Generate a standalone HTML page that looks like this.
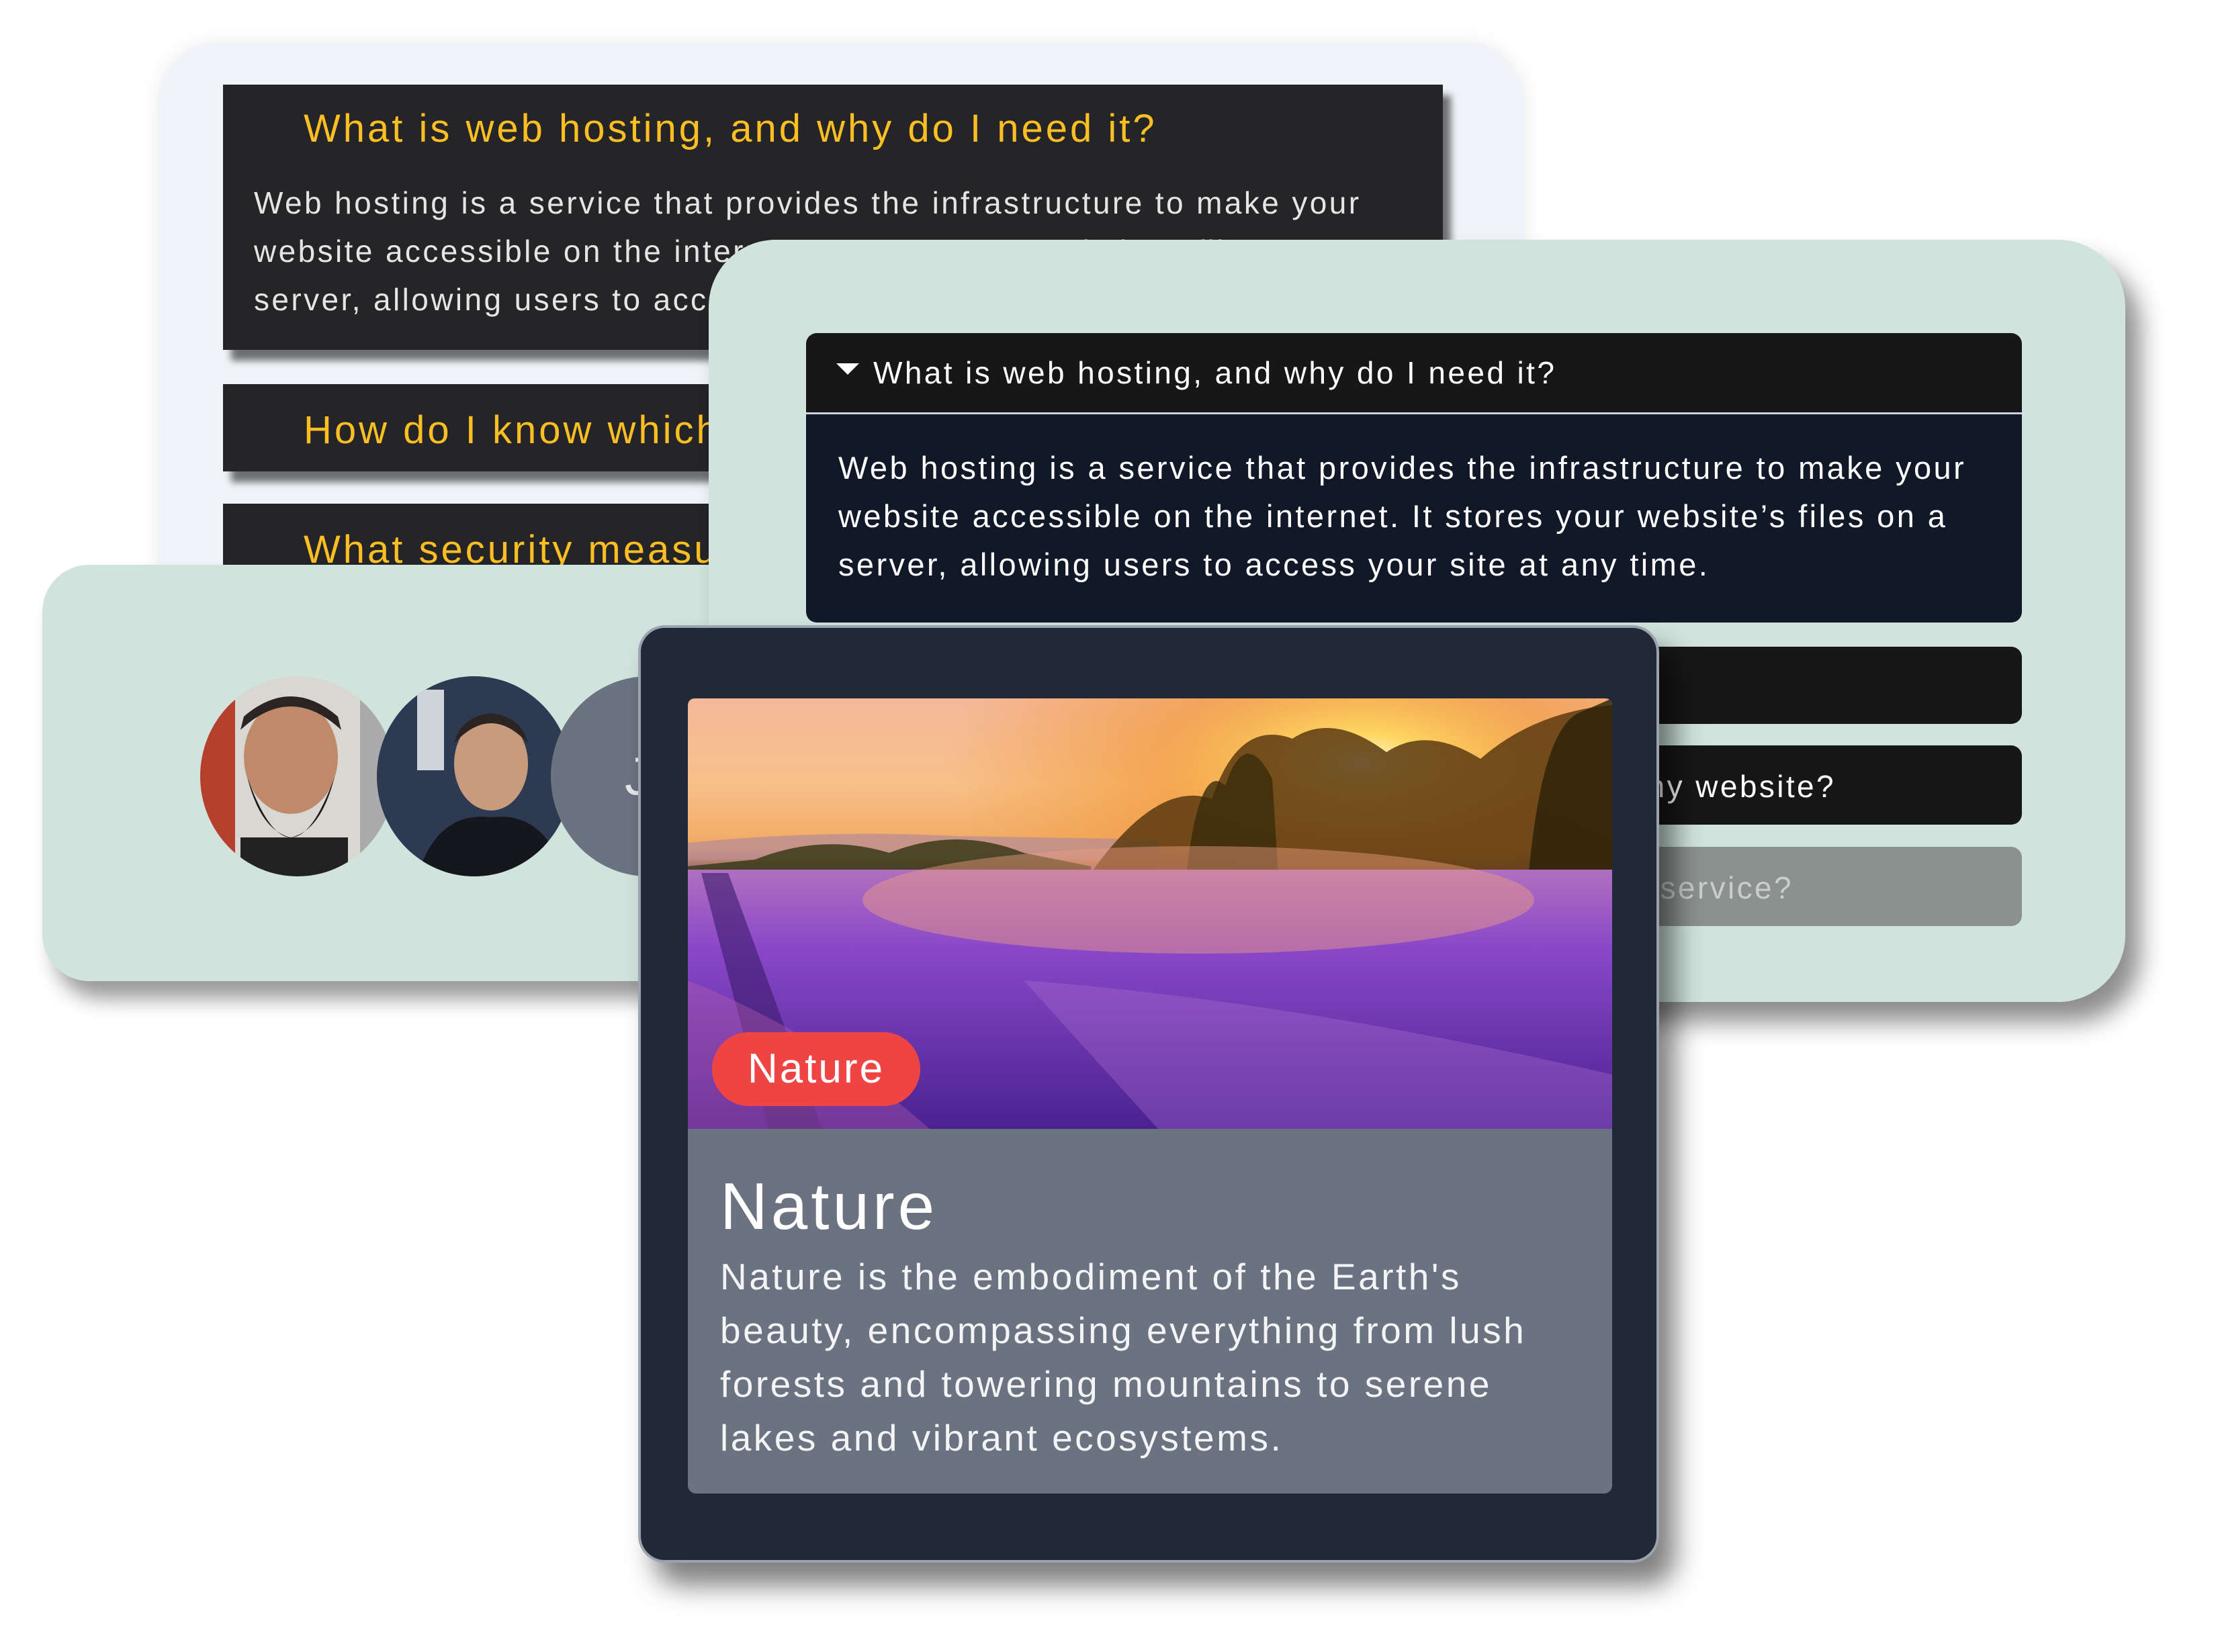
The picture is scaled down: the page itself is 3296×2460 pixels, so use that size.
<!DOCTYPE html>
<html><head><meta charset="utf-8">
<style>
*{margin:0;padding:0;box-sizing:border-box}
html,body{width:3296px;height:2460px;background:#fff;overflow:hidden;font-family:"Liberation Sans",sans-serif}
.abs{position:absolute}
.card1{left:235px;top:63px;width:2035px;height:900px;background:#f0f4f8;border-radius:90px;box-shadow:0 0 30px rgba(0,0,0,.08)}
.faq{position:absolute;left:332px;width:1816px;background:#252527;box-shadow:12px 16px 10px rgba(0,0,0,.55)}
.faq h3{color:#fbbf24;font-weight:normal;font-size:58px;letter-spacing:4px;position:absolute;left:120px;white-space:nowrap}
.faq p{color:#e5e5e5;font-size:46px;line-height:72px;letter-spacing:3.4px;position:absolute;left:46px;top:142px;white-space:nowrap}
.card3{left:63px;top:841px;width:2100px;height:620px;background:#d0e3dc;border-radius:70px;box-shadow:18px 26px 30px rgba(0,0,0,.4)}
.card2{left:1055px;top:357px;width:2109px;height:1135px;background:#d0e3dc;border-radius:100px;box-shadow:22px 30px 36px rgba(0,0,0,.45)}
.acc{position:absolute;left:145px;width:1810px;border-radius:16px;color:#fff;font-size:46px;letter-spacing:3.4px;white-space:nowrap}
.nat{left:950px;top:931px;width:1520px;height:1396px;background:#1f2937;border:4px solid #9ca3af;border-radius:40px;box-shadow:24px 34px 40px rgba(0,0,0,.5)}
.av{position:absolute;width:290px;height:298px;border-radius:50%;overflow:hidden}
</style></head><body>

<div class="abs card1"></div>
<div class="faq" style="top:126px;height:395px">
  <h3 style="top:32px">What is web hosting, and why do I need it?</h3>
  <p style="top:140px">Web hosting is a service that provides the infrastructure to make your<br>website accessible on the internet. It stores your website’s files on a<br>server, allowing users to access your site at any time.</p>
</div>
<div class="faq" style="top:572px;height:130px"><h3 style="top:35px">How do I know which hosting plan is right for me?</h3></div>
<div class="faq" style="top:750px;height:200px"><h3 style="top:35px">What security measures are included?</h3></div>

<div class="abs card3">
  <div class="av" style="left:235px;top:166px;background:linear-gradient(90deg,#b5402d 0 18%,#d9d7d2 18% 82%,#aaa 82%)">
    <svg width="290" height="298"><ellipse cx="135" cy="120" rx="70" ry="85" fill="#c08a6a"/><path d="M60 80 Q135 10 210 80 L205 60 Q135 0 65 60Z" fill="#2a2522"/><path d="M70 150 Q135 330 200 150 Q180 230 135 240 Q90 230 70 150Z" fill="#1e1c1b"/><rect x="60" y="240" width="160" height="70" fill="#222"/></svg>
  </div>
  <div class="av" style="left:498px;top:166px;background:#2e3a52">
    <svg width="290" height="298"><rect x="60" y="20" width="40" height="120" fill="#cfd3da"/><ellipse cx="170" cy="130" rx="55" ry="70" fill="#c79b7e"/><path d="M115 100 Q170 40 225 100 Q215 60 170 55 Q125 60 115 100Z" fill="#2b2420"/><path d="M60 298 Q90 200 170 210 Q250 200 280 298Z" fill="#15171c"/></svg>
  </div>
  <div class="av" style="left:757px;top:166px;background:#6b7280;color:#e5e7eb;font-size:80px;line-height:298px;padding-left:110px">J</div>
</div>

<div class="abs card2">
  <div class="acc" style="top:139px;height:121px;background:#171717;border-radius:16px 16px 0 0;border-bottom:3px solid #d1d5db">
    <span style="position:absolute;left:45px;top:45px;width:0;height:0;border-left:17px solid transparent;border-right:17px solid transparent;border-top:17px solid #fff"></span>
    <span style="position:absolute;left:100px;top:32px">What is web hosting, and why do I need it?</span>
  </div>
  <div class="acc" style="top:260px;height:310px;background:#111827;border-radius:0 0 16px 16px;font-size:47px;line-height:72px;padding:44px 48px 0 48px">Web hosting is a service that provides the infrastructure to make your<br>website accessible on the internet. It stores your website’s files on a<br>server, allowing users to access your site at any time.</div>
  <div class="acc" style="top:606px;height:115px;background:#171717"></div>
  <div class="acc" style="top:753px;height:118px;background:#171717"><span style="position:absolute;right:277px;top:34px">How do I choose the right hosting plan for my website?</span></div>
  <div class="acc" style="top:904px;height:118px;background:#8b918e;color:#c9cecb"><span style="position:absolute;right:340px;top:34px">What is included in a managed hosting service?</span></div>
</div>

<div class="abs nat">
  <div class="abs" style="left:70px;top:105px;width:1376px;height:641px;overflow:hidden;border-radius:10px 10px 0 0;background:linear-gradient(180deg,#f4b89a 0%,#f8c08a 20%,#f0a860 35%,#b08070 38%,#7a3fa0 42%,#8a4cc0 60%,#5a2a9a 100%)">
    <svg width="1376" height="641" style="position:absolute;left:0;top:0">
      <defs>
        <radialGradient id="sun" cx="0.73" cy="0.15" r="0.45"><stop offset="0" stop-color="#fffbe0"/><stop offset="0.15" stop-color="#ffd860" stop-opacity=".95"/><stop offset="0.5" stop-color="#f09020" stop-opacity=".5"/><stop offset="1" stop-color="#f09020" stop-opacity="0"/></radialGradient>
        <linearGradient id="fld" x1="0" y1="0" x2="0" y2="1"><stop offset="0" stop-color="#b070c0"/><stop offset=".3" stop-color="#8a48c8"/><stop offset="1" stop-color="#4a2290"/></linearGradient>
      </defs>
      <rect width="1376" height="641" fill="url(#sun)"/>
      <path d="M0 215 Q200 195 400 205 L700 210 L700 240 L0 240Z" fill="#b58a9a" opacity=".7"/>
      <path d="M600 260 Q700 120 780 150 Q820 30 900 60 Q960 20 1040 80 Q1100 40 1180 90 Q1260 20 1376 10 L1376 270 Z" fill="#5a3a10" opacity=".85"/>
      <path d="M740 280 Q760 90 800 130 Q830 40 870 120 L880 280Z" fill="#3a2a0a" opacity=".8"/>
      <path d="M1250 280 Q1270 40 1330 20 L1376 0 L1376 280Z" fill="#2a2008" opacity=".8"/>
      <path d="M100 240 Q200 200 300 230 Q400 190 500 230 L600 250 L600 270 L0 270 L0 250Z" fill="#3a3a18" opacity=".85"/>
      <rect y="255" width="1376" height="386" fill="url(#fld)"/>
      <ellipse cx="760" cy="300" rx="500" ry="80" fill="#f0a080" opacity=".45"/>
      <path d="M60 260 L200 641 L120 641 L20 260Z" fill="#3a1a6a" opacity=".6"/>
      <path d="M0 420 Q200 500 360 641 L0 641Z" fill="#c060b0" opacity=".35"/>
      <path d="M500 420 Q900 450 1376 560 L1376 641 L700 641Z" fill="#b070d0" opacity=".35"/>
    </svg>
    <div style="position:absolute;left:36px;top:497px;width:310px;height:110px;background:#ef4444;border-radius:55px;color:#fff;font-size:62px;letter-spacing:3px;line-height:110px;text-align:center">Nature</div>
  </div>
  <div class="abs" style="left:70px;top:746px;width:1376px;height:543px;background:#6b7280;border-radius:0 0 12px 12px;color:#fff">
    <div style="position:absolute;left:48px;top:60px;font-size:98px;letter-spacing:5px;line-height:110px">Nature</div>
    <div style="position:absolute;left:48px;top:180px;white-space:nowrap;font-size:55px;letter-spacing:3.5px;line-height:80px;color:#f3f4f6">Nature is the embodiment of the Earth's<br>beauty, encompassing everything from lush<br>forests and towering mountains to serene<br>lakes and vibrant ecosystems.</div>
  </div>
</div>
</body></html>
